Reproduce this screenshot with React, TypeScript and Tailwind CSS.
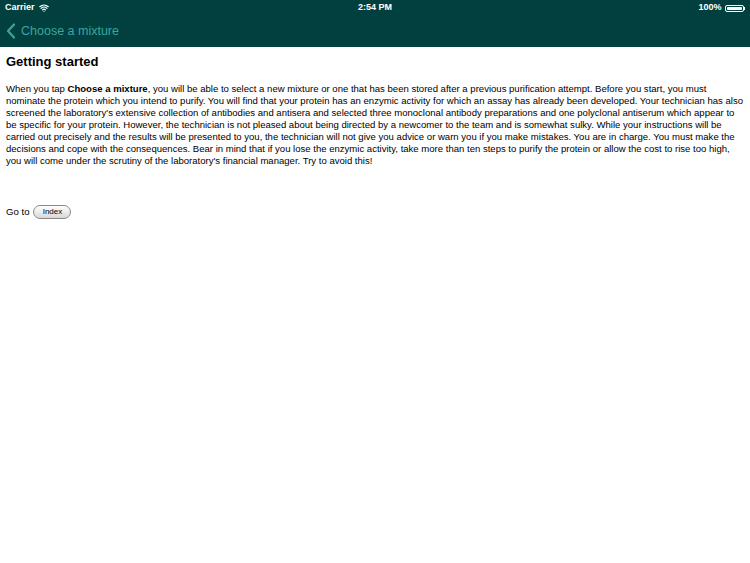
import { Wifi } from "lucide-react";

const lines = [
  null,
  "nominate the protein which you intend to purify. You will find that your protein has an enzymic activity for which an assay has already been developed. Your technician has also",
  "screened the laboratory's extensive collection of antibodies and antisera and selected three monoclonal antibody preparations and one polyclonal antiserum which appear to",
  "be specific for your protein. However, the technician is not pleased about being directed by a newcomer to the team and is somewhat sulky. While your instructions will be",
  "carried out precisely and the results will be presented to you, the technician will not give you advice or warn you if you make mistakes. You are in charge. You must make the",
  "decisions and cope with the consequences. Bear in mind that if you lose the enzymic activity, take more than ten steps to purify the protein or allow the cost to rise too high,",
  "you will come under the scrutiny of the laboratory's financial manager. Try to avoid this!",
];

export default function App() {
  return (
    <div className="min-h-[563px] w-full bg-white font-['Liberation_Sans',Arial,sans-serif] text-black">
      {/* status + nav bar */}
      <header className="h-[47px] bg-[#01403f] text-white">
        <div className="relative flex h-[16px] items-center justify-between px-[5px] text-[9px] font-bold">
          <div className="flex items-center gap-[4px]">
            <span>Carrier</span>
            <Wifi className="h-[10px] w-[10px]" strokeWidth={3} />
          </div>
          <span className="absolute left-1/2 -translate-x-1/2">2:54 PM</span>
          <div className="flex items-center gap-[3px]">
            <span>100%</span>
            <div className="flex items-center">
              <div className="h-[7px] w-[19px] rounded-[2px] border border-white p-[1px]">
                <div className="h-full w-full rounded-[1px] bg-white" />
              </div>
              <div className="h-[3px] w-[1.5px] bg-white" />
            </div>
          </div>
        </div>
        <div className="flex h-[30px] items-center gap-[5px] px-[6px] text-[#3aa59e]">
          <svg width="10" height="16" viewBox="0 0 10 16" fill="none">
            <path d="M8 1.5 L2 8 L8 14.5" stroke="currentColor" strokeWidth="2.2" strokeLinecap="round" strokeLinejoin="round" />
          </svg>
          <span className="text-[12.5px]">Choose a mixture</span>
        </div>
      </header>

      <main className="pl-[6px] pr-[2px]">
        <h1 className="mt-[6px] text-[13px] font-bold leading-[18px]">Getting started</h1>
        <p className="mt-[12px] text-[9.55px] leading-[12px]">
          {lines.map((line, i) =>
            i === 0 ? (
              <span key={i} className="block whitespace-nowrap">
                When you tap <b>Choose a mixture</b>, you will be able to select a new mixture or one that has been stored after a previous purification attempt. Before you start, you must
              </span>
            ) : (
              <span key={i} className="block whitespace-nowrap">
                {line}
              </span>
            )
          )}
        </p>
        <div className="mt-[38px] flex items-center gap-[4px] text-[9.6px]">
          <span>Go to</span>
          <button className="h-[14px] w-[38px] rounded-full border border-[#888] bg-gradient-to-b from-white to-[#d8d8d8] text-[8px] leading-none">
            Index
          </button>
        </div>
      </main>
    </div>
  );
}
